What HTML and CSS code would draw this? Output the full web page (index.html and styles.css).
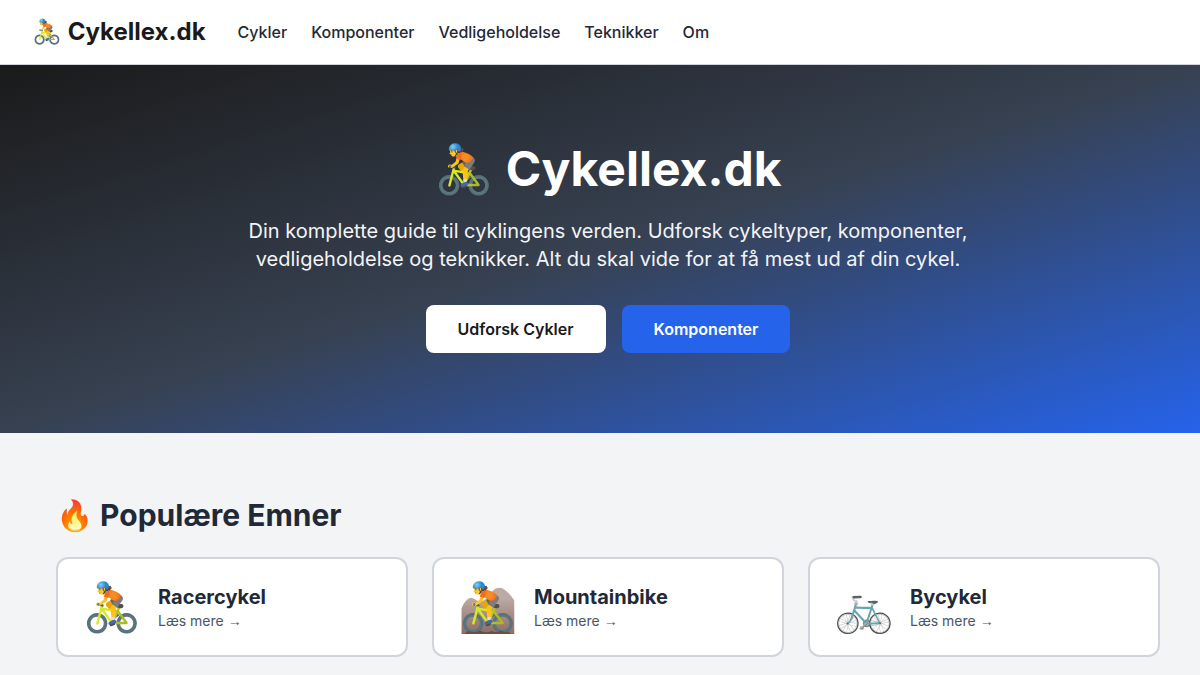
FILE: index.html
```html
<!DOCTYPE html>
<html lang="da">
<head>
<meta charset="utf-8">
<meta name="viewport" content="width=device-width, initial-scale=1">
<title>Cykellex.dk</title>
<link rel="stylesheet" href="styles.css">
</head>
<body>
<header class="header">
  <a class="brand" href="#">🚴 Cykellex.dk</a>
  <nav class="nav">
    <a href="#">Cykler</a>
    <a href="#">Komponenter</a>
    <a href="#">Vedligeholdelse</a>
    <a href="#">Teknikker</a>
    <a href="#">Om</a>
  </nav>
</header>
<main>
  <section class="hero">
    <h1>🚴 Cykellex.dk</h1>
    <p>Din komplette guide til cyklingens verden. Udforsk cykeltyper, komponenter, vedligeholdelse og teknikker. Alt du skal vide for at få mest ud af din cykel.</p>
    <div class="actions">
      <a class="button button-light" href="#">Udforsk Cykler</a>
      <a class="button button-blue" href="#">Komponenter</a>
    </div>
  </section>
  <section class="popular">
    <h2>🔥 Populære Emner</h2>
    <div class="cards">
      <a class="card" href="#"><span class="icon">🚴</span><span class="info"><strong>Racercykel</strong><small>Læs mere <span class="arrow">→</span></small></span></a>
      <a class="card" href="#"><span class="icon">🚵</span><span class="info"><strong>Mountainbike</strong><small>Læs mere <span class="arrow">→</span></small></span></a>
      <a class="card" href="#"><span class="icon">🚲</span><span class="info"><strong>Bycykel</strong><small>Læs mere <span class="arrow">→</span></small></span></a>
    </div>
  </section>
</main>
</body>
</html>
```
FILE: styles.css
```css
* { box-sizing: border-box; }
body { margin: 0; font-family: Inter, "Liberation Sans", sans-serif; line-height: 24px; color: #1f2937; background: #f3f4f6; }
a { color: inherit; text-decoration: none; }
h1, h2, p { margin: 0; }
.header { display: flex; align-items: center; gap: 32px; padding: 16px 32px; background: #fff; border-bottom: 1px solid #d1d5db; }
.brand { font-size: 24px; line-height: 32px; font-weight: 700; color: #1a1a1a; }
.nav { display: flex; gap: 24px; font-weight: 500; }
.hero { padding: 80px 16px 80px 32px; text-align: center; color: #fff; background: linear-gradient(to bottom right, #1a1a1a 0%, #374151 50%, #2563eb 100%); }
.hero h1 { font-size: 48px; line-height: 48px; font-weight: 700; margin-bottom: 24px; }
.hero p { max-width: 768px; margin: 0 auto 32px; font-size: 20px; line-height: 28px; color: #f3f4f6; }
.actions { display: flex; justify-content: center; gap: 16px; }
.button { padding: 12px 32px; border-radius: 8px; font-weight: 600; }
.button-light { background: #fff; color: #1a1a1a; }
.button-blue { background: #2563eb; color: #fff; }
.popular { padding: 64px 40px 16px 56px; }
.popular h2 { font-size: 30px; line-height: 36px; font-weight: 700; margin-bottom: 24px; }
.cards { display: grid; grid-template-columns: repeat(3, 1fr); gap: 24px; }
.card { display: flex; align-items: center; gap: 16px; padding: 16px 24px; background: #fff; border: 2px solid #d1d5db; border-radius: 12px; }
.icon { font-size: 48px; line-height: 64px; }
.info { display: flex; flex-direction: column; }
.info strong { font-size: 20px; line-height: 28px; font-weight: 700; }
.info small { font-size: 14px; line-height: 20px; color: #4b5563; }
.arrow { font-family: "Liberation Sans", sans-serif; }
```
